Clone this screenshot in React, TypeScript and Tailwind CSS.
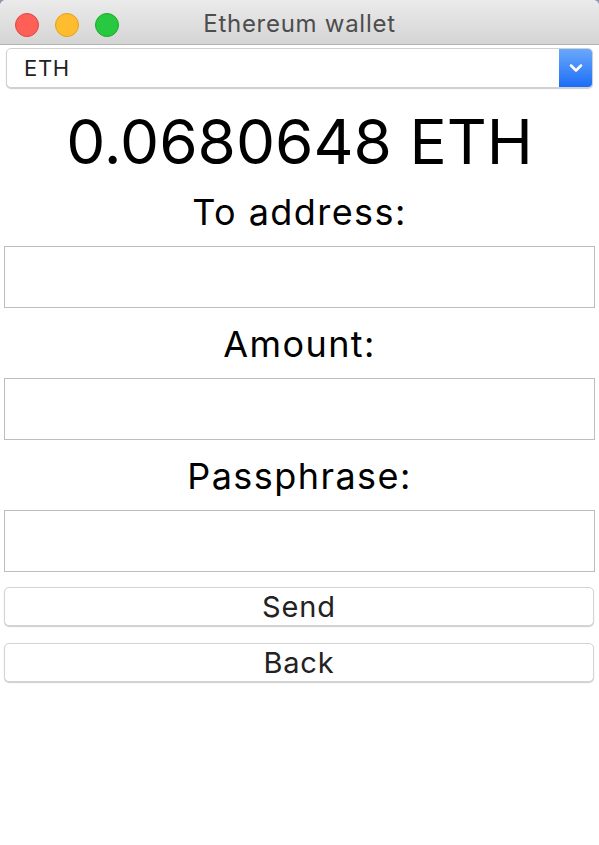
import { ChevronDown } from "lucide-react";

const Field = ({ label }: { label: string }) => (
  <>
    <div className="flex h-[70px] items-center justify-center pt-[2px] text-[36px] tracking-[0.04em] text-black">
      {label}
    </div>
    <div className="mx-[4px] h-[62px] border border-[#bdbdbd] bg-white" />
  </>
);

const Button = ({ label }: { label: string }) => (
  <button
    type="button"
    className="mx-[4px] flex h-[39px] w-[590px] items-center justify-center rounded-[5px] border border-[#d4d4d4] bg-white text-[29px] leading-none tracking-[0.03em] text-[#222] shadow-[0_1px_1px_rgba(0,0,0,0.2)]"
  >
    {label}
  </button>
);

export default function App() {
  return (
    <div className="h-[845px] w-[599px] bg-[#8d9bb0] font-['Inter','Noto_Sans',sans-serif]">
      <div className="flex h-[845px] flex-col overflow-hidden rounded-t-[6px] bg-white">
        <div className="relative flex h-[45px] items-center justify-center border-b border-[#b3b3b3] bg-gradient-to-b from-[#ebebeb] to-[#d5d5d5] pt-[3px]">
          <div className="absolute left-[15px] top-[13px] flex gap-[16px]">
            <span className="h-[24px] w-[24px] rounded-full border border-[#e2463f] bg-[#fe5f57]" />
            <span className="h-[24px] w-[24px] rounded-full border border-[#e1a116] bg-[#febc2e]" />
            <span className="h-[24px] w-[24px] rounded-full border border-[#1aab29] bg-[#28c840]" />
          </div>
          <span className="text-[24px] tracking-[0.03em] text-[#4d4d4d]">Ethereum wallet</span>
        </div>

        <div className="mx-[6px] mt-[3px] flex h-[40px] items-stretch overflow-hidden rounded-[5px] border border-[#d0d0d0] bg-white shadow-[0_1px_1px_rgba(0,0,0,0.2)]">
          <span className="flex flex-1 items-center pl-[17px] text-[22px] tracking-[0.03em] text-[#222]">
            ETH
          </span>
          <span className="flex w-[33px] items-center justify-center bg-gradient-to-b from-[#6aa8fb] to-[#1a6cf7] text-white">
            <ChevronDown size={20} strokeWidth={3} />
          </span>
        </div>

        <div className="flex h-[88px] items-center justify-center pt-[20px] text-[62px] leading-none text-black">
          0.0680648 ETH
        </div>

        <Field label="To address:" />
        <Field label="Amount:" />
        <Field label="Passphrase:" />

        <div className="mt-[15px] flex flex-col gap-[17px]">
          <Button label="Send" />
          <Button label="Back" />
        </div>
      </div>
    </div>
  );
}
